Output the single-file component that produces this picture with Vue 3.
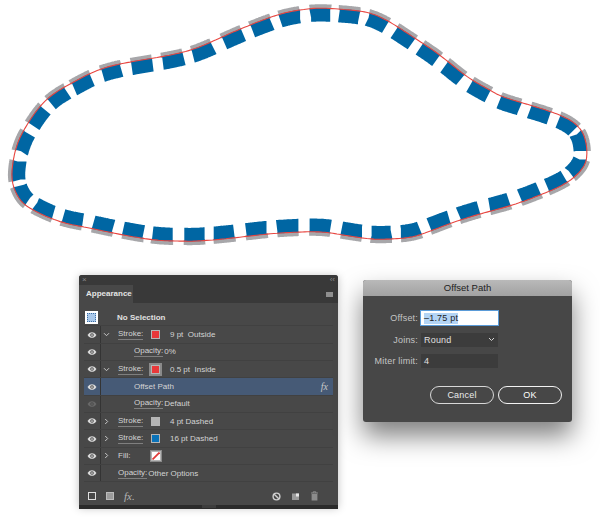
<template>
  <div class="page">
    <svg class="art" width="600" height="262" viewBox="0 0 600 262" fill="none">
      <path v-for="(d, i) in grayDashes" :key="'g' + i" :d="d" stroke="#a7a7aa" stroke-width="5" />
      <path v-for="(d, i) in blueDashes" :key="'b' + i" :d="d" stroke="#0066a3" stroke-width="13.5" />
      <path :d="outline" stroke="#e8453f" stroke-width="1.1" />
    </svg>

    <div class="bottom">
      <div class="panel">
        <div class="panel-top">
          <span class="close">×</span>
          <span class="collapse">‹‹</span>
        </div>
        <div class="tabs">
          <div class="tab">Appearance</div>
          <div class="menu-btn"></div>
        </div>
        <div class="list">
          <div class="row head">
            <div class="thumb"><span></span></div>
            <b>No Selection</b>
          </div>
          <div v-for="r in rows" :key="r.id" class="row" :class="{ selected: r.selected }">
            <div class="eye-cell">
              <svg width="10" height="6" viewBox="0 0 11 7">
                <path d="M0.3 3.5C2 0.9 3.7 0.2 5.5 0.2S9 0.9 10.7 3.5C9 6.1 7.3 6.8 5.5 6.8S2 6.1 0.3 3.5Z" :fill="r.off ? '#686868' : '#dcdcdc'" />
                <circle cx="5.5" cy="3.5" r="2.1" fill="#4a4a4a" />
                <circle cx="5.5" cy="3.5" r="1" :fill="r.off ? '#686868' : '#dcdcdc'" />
              </svg>
            </div>
            <div class="chev-cell">
              <svg v-if="r.chev" width="7" height="7" viewBox="0 0 7 7">
                <path :d="r.chev === 'open' ? 'M1 2.2L3.5 4.7L6 2.2' : 'M2.2 1L4.7 3.5L2.2 6'" fill="none" stroke="#c8c8c8" stroke-width="1" />
              </svg>
            </div>
            <div class="content" :class="{ indent: r.indent }">
              <span v-if="r.label" class="label" :class="{ plain: r.plain }">{{ r.label }}</span>
              <span v-if="r.swatch" class="swatch-cell">
                <span v-if="r.swatch === 'none'" class="swatch none">
                  <svg width="8" height="8" viewBox="0 0 8 8"><path d="M0.5 7.5L7.5 0.5" stroke="#e03a38" stroke-width="1.8" /></svg>
                </span>
                <span v-else class="swatch" :class="{ framed: r.framed }" :style="{ background: r.swatch }"></span>
              </span>
              <span class="value" :class="{ after: r.swatch, gap: r.label && !r.swatch }">{{ r.value }}</span>
            </div>
            <i v-if="r.fx" class="fx">fx</i>
          </div>
        </div>
        <div class="tools">
          <div class="tools-left">
            <span class="sq"></span>
            <span class="sq filled"></span>
            <i class="fx-tool">fx.</i>
          </div>
          <div class="tools-right">
            <svg width="9" height="9" viewBox="0 0 9 9">
              <circle cx="4.5" cy="4.5" r="3.4" fill="none" stroke="#d0d0d0" stroke-width="1.4" />
              <path d="M2.2 2.2L6.8 6.8" stroke="#d0d0d0" stroke-width="1.4" />
            </svg>
            <svg width="9" height="9" viewBox="0 0 9 9">
              <path d="M1 1.5H8V8H1Z" fill="#9a9a9a" />
              <path d="M5 1.5H8V4.5H5Z" fill="#e6e6e6" />
            </svg>
            <svg width="9" height="10" viewBox="0 0 9 10">
              <path d="M1 2H8M3.2 2V0.8H5.8V2" fill="none" stroke="#8d8d8d" />
              <path d="M1.6 3H7.4V9.5H1.6Z" fill="#8d8d8d" />
            </svg>
          </div>
        </div>
        <div class="panel-foot"><span></span></div>
      </div>

      <div class="dialog">
        <div class="dialog-title">Offset Path</div>
        <div class="dialog-body">
          <div class="field-row">
            <label>Offset:</label>
            <div class="input active"><span class="sel">–1.75 pt</span></div>
          </div>
          <div class="field-row">
            <label>Joins:</label>
            <div class="input dark">
              <span>Round</span>
              <svg width="7" height="5" viewBox="0 0 7 5"><path d="M1 1L3.5 3.5L6 1" fill="none" stroke="#d5d5d5" /></svg>
            </div>
          </div>
          <div class="field-row">
            <label>Miter limit:</label>
            <div class="input dark"><span>4</span></div>
          </div>
          <div class="buttons">
            <button>Cancel</button>
            <button class="ok">OK</button>
          </div>
        </div>
      </div>
    </div>
  </div>
</template>

<script setup>
// red line, traced from the reference, clockwise
const linePts = [
  [25, 128], [45, 100], [72, 83], [100, 69], [130, 62], [160, 57], [192, 50], [222, 37], [250, 25], [280, 14],
  [300, 10], [320, 8], [350, 10], [370, 13], [390, 22], [413, 37], [440, 55], [467, 77], [490, 90], [503, 97],
  [533, 106], [560, 115], [577, 125], [585, 138], [587, 155], [583, 168], [567, 183], [540, 195], [513, 205],
  [487, 212], [460, 220], [433, 230], [413, 237], [390, 239], [370, 239], [343, 235], [323, 232], [300, 232],
  [267, 234], [233, 238], [200, 241], [180, 241], [153, 240], [113, 233], [90, 228], [60, 222], [33, 210],
  [20, 200], [12, 182], [13, 162], [17, 145]
]

// roughly where each blue dash sits, snapped onto the line below
const dashPts = [
  [39, 117], [59, 98], [83, 84], [112, 72], [142, 65], [173, 58], [203, 50], [233, 37], [262, 26], [290, 17],
  [320, 13], [349, 16], [377, 22], [404, 36], [429, 53], [453, 73], [479, 91], [509, 105], [540, 113], [567, 125],
  [580, 142], [575, 165], [556, 182], [529, 193], [499, 202], [468, 211], [439, 221], [410, 230], [381, 235],
  [352, 231], [320, 227], [288, 227], [256, 229], [224, 232], [194, 234], [163, 235], [134, 231], [104, 224],
  [73, 217], [45, 208], [23, 194], [18, 171], [25, 143]
]

const sampleClosed = (pts, steps) => {
  const n = pts.length
  const out = []
  for (let i = 0; i < n; i++) {
    const p0 = pts[(i - 1 + n) % n]
    const p1 = pts[i]
    const p2 = pts[(i + 1) % n]
    const p3 = pts[(i + 2) % n]
    for (let s = 0; s < steps; s++) {
      const t = s / steps
      const f = (a, b, c, d) =>
        0.5 * (2 * b + (c - a) * t + (2 * a - 5 * b + 4 * c - d) * t * t + (3 * b - a - 3 * c + d) * t * t * t)
      out.push([f(p0[0], p1[0], p2[0], p3[0]), f(p0[1], p1[1], p2[1], p3[1])])
    }
  }
  return out
}

const smooth = (pts, radius) =>
  pts.map((_, i) => {
    let x = 0
    let y = 0
    for (let k = -radius; k <= radius; k++) {
      const p = pts[(i + k + pts.length) % pts.length]
      x += p[0]
      y += p[1]
    }
    const c = radius * 2 + 1
    return [x / c, y / c]
  })

const curve = smooth(sampleClosed(linePts, 40), 20)
const at = (i) => curve[(i + curve.length) % curve.length]

const toPath = (pts) => 'M' + pts.map((p) => `${p[0].toFixed(1)} ${p[1].toFixed(1)}`).join('L')

const outline = toPath(curve.filter((_, i) => i % 4 === 0)) + 'Z'

// piece of the line around one sample, moved by `shift` (positive is outward)
const dashPiece = (center, half, shift) => {
  const walk = (dir) => {
    const idx = [center]
    let left = half
    let i = center
    while (left > 0) {
      const a = at(i)
      const b = at(i + dir)
      left -= Math.hypot(b[0] - a[0], b[1] - a[1])
      i += dir
      idx.push(i)
    }
    return idx
  }
  const ids = [...walk(-1).reverse(), ...walk(1).slice(1)]
  const pts = ids.map((i) => {
    const a = at(i - 16)
    const b = at(i + 16)
    const len = Math.hypot(b[0] - a[0], b[1] - a[1]) || 1
    const p = at(i)
    return [p[0] + ((b[1] - a[1]) / len) * shift, p[1] - ((b[0] - a[0]) / len) * shift]
  })
  return toPath(pts)
}

const nearest = (p) => {
  let best = 0
  let bestDist = Infinity
  curve.forEach((c, i) => {
    const dist = Math.hypot(c[0] - p[0], c[1] - p[1])
    if (dist < bestDist) {
      bestDist = dist
      best = i
    }
  })
  return best
}

const anchors = dashPts.map(nearest)
const blueDashes = anchors.map((i) => dashPiece(i, 10, -6.5))
const grayDashes = anchors.map((i) => dashPiece(i, 10.5, 1.5))

const rows = [
  { id: 1, chev: 'open', label: 'Stroke:', swatch: '#e8383a', value: '9 pt  Outside' },
  { id: 2, indent: true, label: 'Opacity:', value: '0%' },
  { id: 3, chev: 'open', label: 'Stroke:', swatch: '#e8383a', framed: true, value: '0.5 pt  Inside' },
  { id: 4, indent: true, value: 'Offset Path', selected: true, fx: true },
  { id: 5, indent: true, off: true, label: 'Opacity:', value: 'Default' },
  { id: 6, chev: 'closed', label: 'Stroke:', swatch: '#b4b4b4', value: '4 pt Dashed' },
  { id: 7, chev: 'closed', label: 'Stroke:', swatch: '#0a72b8', value: '16 pt Dashed' },
  { id: 8, chev: 'closed', label: 'Fill:', plain: true, swatch: 'none' },
  { id: 9, label: 'Opacity:', value: 'Other Options' }
]
</script>

<style>
html, body {
  margin: 0;
  background: #fff;
}
</style>

<style scoped>
.page {
  width: 600px;
  height: 517px;
  overflow: hidden;
  font-family: "Liberation Sans", Arial, sans-serif;
  background: #fff;
}
.art {
  display: block;
  filter: blur(0.3px);
}
.bottom {
  display: flex;
  align-items: flex-start;
  padding: 13px 0 0 79px;
  gap: 25px;
}

/* appearance panel */
.panel {
  width: 259px;
  height: 232px;
  background: #484848;
  border-radius: 3px 3px 0 0;
  box-shadow: 0 1px 8px rgba(0, 0, 0, 0.25);
  display: flex;
  flex-direction: column;
  color: #d4d4d4;
  font-size: 8px;
}
.panel-top {
  height: 10px;
  flex: none;
  background: #393939;
  border-radius: 3px 3px 0 0;
  display: flex;
  justify-content: space-between;
  align-items: center;
  padding: 0 3px;
  color: #8b8b8b;
  font-size: 8px;
  line-height: 10px;
}
.tabs {
  height: 18px;
  flex: none;
  background: #393939;
  display: flex;
  justify-content: space-between;
  align-items: center;
  padding-right: 5px;
}
.tab {
  width: 54px;
  height: 18px;
  padding-left: 7px;
  box-sizing: border-box;
  background: #484848;
  color: #e4e4e4;
  font-weight: 700;
  line-height: 18px;
}
.menu-btn {
  width: 7px;
  height: 5px;
  background: #8f8f8f;
}
.list {
  margin: 6px 5px 0;
  display: flex;
  flex-direction: column;
}
.row {
  height: 17.35px;
  display: flex;
  align-items: center;
  border-bottom: 1px solid #414141;
  box-sizing: border-box;
  position: relative;
}
.row.selected {
  background: #465a76;
}
.row.head b {
  margin-left: 19px;
  color: #e0e0e0;
  font-weight: 700;
}
.thumb {
  width: 13px;
  height: 13px;
  margin-left: 1px;
  background: #fff;
  display: flex;
  align-items: center;
  justify-content: center;
}
.thumb span {
  width: 7px;
  height: 7px;
  background: #a9c8ea;
  border: 1px dotted #3c6ea4;
}
.eye-cell {
  width: 17px;
  height: 100%;
  flex: none;
  display: flex;
  align-items: center;
  justify-content: center;
  border-right: 1px solid #343434;
  box-sizing: border-box;
}
.chev-cell {
  width: 17px;
  flex: none;
  padding-left: 2px;
  box-sizing: border-box;
  display: flex;
}
.chev-cell svg {
  display: block;
}
.content {
  flex: 1;
  display: flex;
  align-items: center;
  white-space: pre;
}
.content.indent {
  padding-left: 16px;
}
.label {
  border-bottom: 1px solid #7f7f7f;
  line-height: 10px;
}
.label.plain {
  border-bottom: none;
}
.swatch-cell {
  position: absolute;
  left: 65px;
  top: 2px;
  width: 13px;
  height: 13px;
  display: flex;
  align-items: center;
  justify-content: center;
}
.swatch {
  width: 7px;
  height: 7px;
  border: 1px solid #b5b5b5;
  display: block;
}
.swatch.framed {
  outline: 2px solid #8a8a8a;
}
.swatch.none {
  width: 8px;
  height: 8px;
  background: #fff;
  outline: 1px solid #8a8a8a;
}
.swatch.none svg {
  display: block;
}
.value.after {
  position: absolute;
  left: 86px;
}
.value.gap {
  margin-left: 1px;
}
.fx {
  position: absolute;
  right: 5px;
  font-family: "Liberation Serif", serif;
  font-size: 10px;
  color: #c9c9c9;
}
.tools {
  flex: none;
  height: 18px;
  margin-top: 5px;
  padding: 0 0 0 9px;
  display: flex;
  justify-content: space-between;
  align-items: center;
}
.tools-left {
  display: flex;
  align-items: center;
  gap: 10px;
}
.sq {
  width: 6px;
  height: 6px;
  border: 1px solid #dedede;
}
.sq.filled {
  background: #9c9c9c;
  border-color: #bcbcbc;
}
.fx-tool {
  font-family: "Liberation Serif", serif;
  font-size: 11px;
  color: #b5b5b5;
}
.tools-right {
  display: flex;
  align-items: center;
  gap: 10px;
  padding-right: 19px;
}
.panel-foot {
  flex: none;
  height: 4px;
  margin-top: auto;
  background: #2b2b2b;
  display: flex;
  justify-content: center;
}
.panel-foot span {
  width: 14px;
  height: 3px;
  background: #3d3d3d;
}

/* offset path dialog */
.dialog {
  width: 209px;
  height: 142px;
  margin-top: 5px;
  border-radius: 3px;
  background: #474747;
  box-shadow: 0 14px 26px rgba(0, 0, 0, 0.5);
  display: flex;
  flex-direction: column;
}
.dialog-title {
  height: 16px;
  flex: none;
  border-radius: 3px 3px 0 0;
  background: linear-gradient(#b9b9b9, #a2a2a2);
  color: #222;
  font-size: 9.5px;
  line-height: 16px;
  text-align: center;
}
.dialog-body {
  padding-top: 15px;
  display: flex;
  flex-direction: column;
}
.field-row {
  display: flex;
  align-items: center;
  height: 14px;
  margin-bottom: 7.5px;
  font-size: 9px;
  letter-spacing: 0.2px;
}
.field-row label {
  width: 55px;
  text-align: right;
  color: #c4c4c4;
  margin-right: 3px;
}
.input {
  width: 77px;
  height: 14px;
  box-sizing: border-box;
  padding: 0 3px;
  display: flex;
  align-items: center;
  justify-content: space-between;
  white-space: pre;
}
.input.active {
  justify-content: flex-start;
  background: #fff;
  color: #222;
  outline: 1px solid #5a9bd8;
}
.sel {
  background: #b3d4f5;
  line-height: 11px;
}
.input.dark {
  background: #3c3c3c;
  color: #e0e0e0;
}
.buttons {
  display: flex;
  gap: 4px;
  margin: 10px 0 0 67px;
}
.buttons button {
  width: 64px;
  height: 18px;
  padding: 0;
  background: #474747;
  border: 1px solid #d8d8d8;
  border-radius: 9px;
  color: #ececec;
  font-family: inherit;
  font-size: 9px;
  letter-spacing: 0.2px;
}
.buttons .ok {
  border-width: 1.5px;
  border-color: #f2f2f2;
  color: #fff;
}
</style>
